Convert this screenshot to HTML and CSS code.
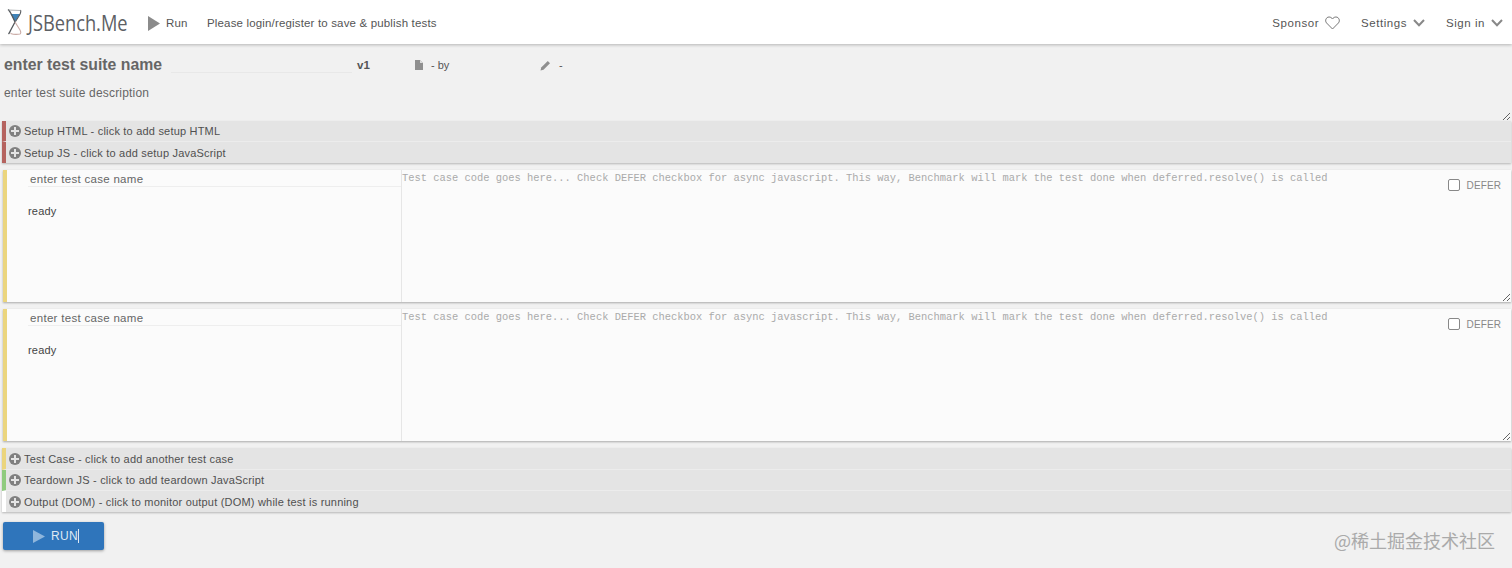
FILE: index.html
```html
<!DOCTYPE html>
<html lang="en">
<head>
<meta charset="utf-8">
<title>JSBench.Me</title>
<link rel="stylesheet" href="styles.css">
</head>
<body>
<header class="navbar">
  <a class="brand">
    <svg class="glass" width="16" height="26" viewBox="0 0 16 26">
      <path d="M3.5 5 H13 L8.5 12 Q8 13 7.5 12 Z" fill="#3f83b8"/>
      <path d="M1 0.5 Q2.5 1.5 5 6.5 L8 13 L3.5 21.5 Q2.5 24 1.5 25" fill="none" stroke="#54585c" stroke-width="1.3"/>
      <path d="M13.5 1 Q14.5 3 12 7 L8.5 12.5" fill="none" stroke="#54585c" stroke-width="1.1"/>
      <path d="M8 13 L13 21 Q14.5 24 13 25 Q8 26 3.5 24.5" fill="none" stroke="#c9aaa5" stroke-width="1.1"/>
      <path d="M1 1 L13.5 1.5" stroke="#9a9da0" stroke-width=".8"/>
    </svg>
    <span class="brand-name">JSBench.Me</span>
  </a>
  <a class="nav-run"><svg class="nav-play" width="12" height="15" viewBox="0 0 12 15"><path d="M0 0 L12 7.5 L0 15 Z" fill="#8b8b8b"/></svg><span>Run</span></a>
  <span class="nav-msg">Please login/register to save &amp; publish tests</span>
  <nav class="nav-right">
    <a class="nav-item">Sponsor
      <svg width="15" height="14" viewBox="0 0 15 14"><path d="M7.5 13 L1.6 7 C-0.4 4.8 1 1 4.1 1 C5.7 1 6.8 1.9 7.5 3 C8.2 1.9 9.3 1 10.9 1 C14 1 15.4 4.8 13.4 7 Z" fill="none" stroke="#777" stroke-width="1"/></svg>
    </a>
    <a class="nav-item">Settings
      <svg width="12" height="8" viewBox="0 0 12 8"><path d="M1 1 L6 6.2 L11 1" fill="none" stroke="#888" stroke-width="2"/></svg>
    </a>
    <a class="nav-item">Sign in
      <svg width="12" height="8" viewBox="0 0 12 8"><path d="M1 1 L6 6.2 L11 1" fill="none" stroke="#888" stroke-width="2"/></svg>
    </a>
  </nav>
</header>

<main class="page">
  <div class="suite-head">
    <div class="suite-name">enter test suite name</div>
    <div class="suite-line"></div>
    <div class="suite-ver">v1</div>
    <div class="suite-meta meta-by">
      <svg width="8" height="10" viewBox="0 0 8 10"><path d="M0 0 H5 L8 3 V10 H0 Z" fill="#8f8f8f"/><path d="M5 0 V3 H8" fill="#ddd"/></svg>
      <span>- by</span>
    </div>
    <div class="suite-meta">
      <svg width="11" height="11" viewBox="0 0 11 11"><path d="M0.5 10.5 L1.2 7.5 L7.8 1 L10 3.2 L3.5 9.8 Z" fill="#8f8f8f"/></svg>
      <span>-</span>
    </div>
  </div>
  <div class="suite-desc">enter test suite description</div>

  <section class="group">
    <div class="row row-red"><span class="plus"></span><span>Setup HTML - click to add setup HTML</span></div>
    <div class="row row-red"><span class="plus"></span><span>Setup JS - click to add setup JavaScript</span></div>
  </section>

  <section class="case">
    <div class="case-side">
      <div class="case-name">enter test case name</div>
      <div class="case-status">ready</div>
    </div>
    <div class="case-code">
      <span class="code-text">Test case code goes here... Check DEFER checkbox for async javascript. This way, Benchmark will mark the test done when deferred.resolve() is called</span>
      <label class="defer"><span class="check"></span>DEFER</label>
    </div>
  </section>

  <section class="case">
    <div class="case-side">
      <div class="case-name">enter test case name</div>
      <div class="case-status">ready</div>
    </div>
    <div class="case-code">
      <span class="code-text">Test case code goes here... Check DEFER checkbox for async javascript. This way, Benchmark will mark the test done when deferred.resolve() is called</span>
      <label class="defer"><span class="check"></span>DEFER</label>
    </div>
  </section>

  <section class="group">
    <div class="row row-yellow"><span class="plus"></span><span>Test Case - click to add another test case</span></div>
    <div class="row row-green"><span class="plus"></span><span>Teardown JS - click to add teardown JavaScript</span></div>
    <div class="row row-white"><span class="plus"></span><span>Output (DOM) - click to monitor output (DOM) while test is running</span></div>
  </section>

  <button class="run-btn"><svg width="12" height="13" viewBox="0 0 12 13"><path d="M0 0 L12 6.5 L0 13 Z" fill="#8fb6dc"/></svg><span>RUN</span><i class="caret"></i></button>
</main>
<div class="watermark">@稀土掘金技术社区</div>
</body>
</html>
```

FILE: styles.css
```css
* { box-sizing: border-box; }
html, body { height: 100%; }
body {
  margin: 0;
  background: #f1f1f1;
  font-family: "Liberation Sans", Arial, sans-serif;
  font-size: 11px;
  color: #555;
  overflow: hidden;
}
.navbar {
  height: 44px;
  background: #fff;
  box-shadow: 0 1px 3px rgba(0,0,0,.25);
  display: flex;
  align-items: center;
  padding: 2px 9px 0 7px;
  font-size: 11.5px;
  letter-spacing: .16px;
  color: #555;
}
.brand { display: flex; align-items: center; width: 141px; }
.glass { flex: none; margin-top: -2px; }
.brand-name {
  font-family: "Open Sans", sans-serif;
  font-size: 22px;
  letter-spacing: 0;
  color: #5d6064;
  margin-left: 5px;
  margin-top: -3px;
  transform: scaleX(.83);
  transform-origin: left center;
}
.nav-run { display: flex; align-items: center; gap: 6px; width: 59px; }
.nav-msg { flex: 1; }
.nav-right { display: flex; gap: 21px; }
.nav-item { display: flex; align-items: center; gap: 6px; letter-spacing: .55px; }

.page { padding: 0 0 0 2px; }
.suite-head { display: flex; align-items: center; height: 40px; padding: 2px 0 0 2px; }
.suite-name { font-size: 15.8px; font-weight: 700; color: #666; width: 167px; }
.suite-line { width: 181px; height: 1px; background: #e8e8e8; margin-top: 15px; }
.suite-ver { width: 58px; margin-left: 5px; font-weight: 700; color: #555; font-size: 11.5px; }
.suite-meta { display: flex; align-items: center; gap: 8px; font-size: 11px; }
.meta-by { width: 125px; }
.suite-desc {
  height: 37px;
  padding: 2px 0 0 2px;
  font-size: 12px;
  letter-spacing: .18px;
  color: #666;
  margin-right: 1px;
  resize: vertical;
  overflow: hidden;
}

.group { box-shadow: 0 1px 2px rgba(0,0,0,.25); margin-right: 1px; }
.row {
  height: 21px;
  display: flex;
  align-items: center;
  gap: 3px;
  background: #e4e4e4;
  border-left: 4px solid #b5635f;
  border-bottom: 1px solid #ececec;
  padding-left: 3px;
  font-size: 11px;
  letter-spacing: .2px;
  color: #505050;
}
.row:last-child { border-bottom: 0; }
.row-yellow { border-left-color: #ebd57d; height: 22px; padding-top: 1px; }
.row-green { border-left-color: #8fcb7e; }
.row-white { border-left-color: #fff; }
.plus {
  width: 12px; height: 12px;
  border-radius: 50%;
  background:
    linear-gradient(#e4e4e4,#e4e4e4) center/8px 2px no-repeat,
    linear-gradient(#e4e4e4,#e4e4e4) center/2px 8px no-repeat,
    #808080;
}

.case {
  display: flex;
  height: 132px;
  margin: 7px 1px 7px 1px;
  background: #fbfbfb;
  border-left: 4px solid #ebd57d;
  box-shadow: 0 1px 2px rgba(0,0,0,.3);
}
.case-side { width: 395px; border-right: 1px solid #e6e6e6; flex: none; }
.case-name {
  height: 17px;
  margin: 0 0 0 21px;
  padding: 3px 0 0 2px;
  font-size: 11.5px;
  letter-spacing: .3px;
  color: #666;
  border-bottom: 1px solid #eee;
}
.case-status { margin: 18px 0 0 21px; font-size: 11px; letter-spacing: .2px; color: #444; }
.case-code {
  position: relative;
  flex: 1;
  resize: vertical;
  overflow: hidden;
  font-family: "Liberation Mono", monospace;
  font-size: 10.43px;
  color: #aaa;
  padding-top: 2px;
}
.code-text { display: block; }
.defer {
  position: absolute;
  right: 10px;
  top: 9px;
  display: flex;
  align-items: center;
  gap: 7px;
  font-family: "Liberation Sans", Arial, sans-serif;
  font-size: 10px;
  letter-spacing: .1px;
  color: #888;
}
.check { width: 12px; height: 12px; border: 1px solid #888; border-radius: 2px; background: #fff; }

.run-btn {
  margin-top: 10px;
  margin-left: 1px;
  width: 101px;
  height: 28px;
  display: flex;
  align-items: center;
  padding: 0 0 0 30px;
  gap: 6px;
  border: 0;
  border-radius: 2px;
  background: #2f75bb;
  color: #dfe9f3;
  font-family: "Liberation Sans", Arial, sans-serif;
  font-size: 12px;
  letter-spacing: .3px;
  box-shadow: 0 1px 3px rgba(0,0,0,.35);
}
.caret { width: 1px; height: 14px; background: #dfe9f3; margin-left: -6px; }
.watermark {
  position: absolute;
  right: 17px;
  bottom: 17px;
  font-family: "Noto Sans CJK SC", sans-serif;
  font-size: 18px;
  line-height: 22px;
  color: #aaa;
}
```
